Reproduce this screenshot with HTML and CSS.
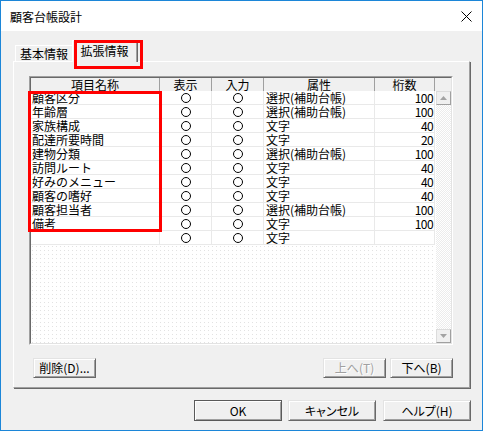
FILE: index.html
```html
<!DOCTYPE html>
<html lang="ja">
<head>
<meta charset="utf-8">
<title>顧客台帳設計</title>
<link rel="stylesheet" href="styles.css">
</head>
<body>
<div class="window">
  <div class="titlebar">
    <span class="title">顧客台帳設計</span>
    <svg class="close" width="11" height="11" viewBox="0 0 11 11"><path d="M0.5 0.5L10.5 10.5M10.5 0.5L0.5 10.5" stroke="#000" stroke-width="1" fill="none"/></svg>
  </div>
  <div class="client">
    <div class="tabs">
      <div class="tab">基本情報</div>
      <div class="tab active">拡張情報</div>
    </div>
    <div class="panel">
      <div class="list">
        <div class="list-inner">
          <div class="table">
            <div class="row head">
              <div class="cell">項目名称</div>
              <div class="cell">表示</div>
              <div class="cell">入力</div>
              <div class="cell">属性</div>
              <div class="cell">桁数</div>
            </div>
            <div class="row"><div class="cell name">顧客区分</div><div class="cell ctr"><i class="c"></i></div><div class="cell ctr"><i class="c"></i></div><div class="cell attr">選択(補助台帳)</div><div class="cell num">100</div></div>
            <div class="row"><div class="cell name">年齢層</div><div class="cell ctr"><i class="c"></i></div><div class="cell ctr"><i class="c"></i></div><div class="cell attr">選択(補助台帳)</div><div class="cell num">100</div></div>
            <div class="row"><div class="cell name">家族構成</div><div class="cell ctr"><i class="c"></i></div><div class="cell ctr"><i class="c"></i></div><div class="cell attr">文字</div><div class="cell num">40</div></div>
            <div class="row"><div class="cell name">配達所要時間</div><div class="cell ctr"><i class="c"></i></div><div class="cell ctr"><i class="c"></i></div><div class="cell attr">文字</div><div class="cell num">20</div></div>
            <div class="row"><div class="cell name">建物分類</div><div class="cell ctr"><i class="c"></i></div><div class="cell ctr"><i class="c"></i></div><div class="cell attr">選択(補助台帳)</div><div class="cell num">100</div></div>
            <div class="row"><div class="cell name">訪問ルート</div><div class="cell ctr"><i class="c"></i></div><div class="cell ctr"><i class="c"></i></div><div class="cell attr">文字</div><div class="cell num">40</div></div>
            <div class="row"><div class="cell name">好みのメニュー</div><div class="cell ctr"><i class="c"></i></div><div class="cell ctr"><i class="c"></i></div><div class="cell attr">文字</div><div class="cell num">40</div></div>
            <div class="row"><div class="cell name">顧客の嗜好</div><div class="cell ctr"><i class="c"></i></div><div class="cell ctr"><i class="c"></i></div><div class="cell attr">文字</div><div class="cell num">40</div></div>
            <div class="row"><div class="cell name">顧客担当者</div><div class="cell ctr"><i class="c"></i></div><div class="cell ctr"><i class="c"></i></div><div class="cell attr">選択(補助台帳)</div><div class="cell num">100</div></div>
            <div class="row"><div class="cell name">備考</div><div class="cell ctr"><i class="c"></i></div><div class="cell ctr"><i class="c"></i></div><div class="cell attr">文字</div><div class="cell num">100</div></div>
            <div class="row"><div class="cell name"></div><div class="cell ctr"><i class="c"></i></div><div class="cell ctr"><i class="c"></i></div><div class="cell attr">文字</div><div class="cell num"></div></div>
            <div class="empty"></div>
          </div>
          <div class="vscroll">
            <div class="vs-head"></div>
            <div class="sbtn"><svg width="7" height="4" viewBox="0 0 7 4"><path d="M3.5 0L7 4H0Z" fill="#a3a3a3"/></svg></div>
            <div class="track"></div>
            <div class="sbtn"><svg width="7" height="4" viewBox="0 0 7 4"><path d="M0 0H7L3.5 4Z" fill="#a3a3a3"/></svg></div>
          </div>
        </div>
        <div class="mark"></div>
      </div>
      <div class="panel-buttons">
        <div class="btn small">削除(D)...</div>
        <div class="spacer"></div>
        <div class="btn small disabled">上へ(T)</div>
        <div class="btn small">下へ(B)</div>
      </div>
    </div>
    <div class="dialog-buttons">
      <div class="btn big default">OK</div>
      <div class="btn big">キャンセル</div>
      <div class="btn big help">ヘルプ(H)</div>
    </div>
  </div>
</div>
</body>
</html>
```
FILE: styles.css
```css
* { box-sizing: border-box; }
html, body { margin: 0; padding: 0; }
body {
  width: 483px;
  height: 431px;
  overflow: hidden;
  background: #fff;
  font-family: "Noto Sans CJK JP", "Liberation Sans", sans-serif;
  font-size: 12px;
  color: #000;
}
.window {
  width: 483px;
  height: 431px;
  border: 1px solid #1c86d8;
  background: #f0f0f0;
  display: flex;
  flex-direction: column;
}
.titlebar {
  height: 30px;
  flex: none;
  background: #fff;
  display: flex;
  align-items: center;
  justify-content: space-between;
  padding: 0 10px 0 9px;
}
.title { line-height: 14px; margin-top: 1px; }
.close { display: block; margin-top: 1px; }

.client {
  flex: 1;
  padding: 9px 11px 0 12px;
}
.tabs {
  height: 21px;
  display: flex;
  align-items: flex-end;
  padding-left: 2px;
}
.tab {
  width: 58px;
  height: 16px;
  border: 1px solid #fff;
  border-bottom: none;
  border-right-color: #a0a0a0;
  text-align: center;
  line-height: 15px;
  background: #f0f0f0;
}
.tab.active {
  position: relative;
  z-index: 2;
  width: 65px;
  height: 22px;
  margin-left: -1px;
  margin-bottom: -1px;
  line-height: 19px;
  padding-bottom: 2px;
  box-shadow: 1px 0 0 #696969;
}
.tab.active::after {
  content: "";
  position: absolute;
  left: 1px;
  top: -1px;
  width: 63px;
  height: 23px;
  border: 3px solid #ff0000;
}
.panel {
  width: 457px;
  height: 327px;
  border: 1px solid #fff;
  border-right-color: #a0a0a0;
  border-bottom-color: #a0a0a0;
  box-shadow: 1px 1px 0 #696969;
  padding: 14px 0 0 15px;
}
.list {
  position: relative;
  width: 424px;
  height: 269px;
  border: 1px solid #a0a0a0;
  border-right-color: #fff;
  border-bottom-color: #fff;
}
.list-inner {
  height: 100%;
  border: 1px solid #696969;
  border-right-color: #e3e3e3;
  border-bottom-color: #e3e3e3;
  display: flex;
  background: #fff;
}
.table {
  width: 404px;
  display: flex;
  flex-direction: column;
}
.row {
  display: grid;
  grid-template-columns: 129px 52px 52px 111px 60px;
  height: 14px;
  flex: none;
}
.row .cell {
  border-right: 1px solid #e9e9e9;
  border-bottom: 1px solid #e9e9e9;
  line-height: 13px;
  white-space: nowrap;
}
.row.head { height: 13px; background: #f0f0f0; }
.row.head .cell {
  border-right: 1px solid #a0a0a0;
  border-bottom: none;
  text-align: center;
  line-height: 13px;
}
.name { padding-left: 1px; }
.attr { padding-left: 2px; }
.num { text-align: right; padding-right: 1px; letter-spacing: -0.6px; }
.ctr { display: flex; align-items: center; justify-content: center; }
.c {
  display: block;
  width: 10px;
  height: 10px;
  border: 1px solid #000;
  border-radius: 50%;
  margin-left: 1px;
}
.empty {
  flex: 1;
  background: #fff radial-gradient(circle at 1.5px 1.5px, #e2e2e2 0.7px, transparent 0.9px) 0 0 / 4px 4px;
}
.vscroll {
  width: 16px;
  display: flex;
  flex-direction: column;
}
.vs-head { height: 13px; background: #f0f0f0; flex: none; }
.sbtn {
  height: 14px;
  flex: none;
  margin-left: 1px;
  background: #f0f0f0;
  border: 1px solid #dcdcdc;
  border-right-color: #a0a0a0;
  border-bottom-color: #a0a0a0;
  display: flex;
  align-items: center;
  justify-content: center;
}
.sbtn svg { display: block; }
.track {
  flex: 1;
  margin-left: 1px;
  background: repeating-conic-gradient(#ffffff 0 25%, #ececec 0 50%) 0 0 / 2px 2px;
}
.mark {
  position: absolute;
  left: -2px;
  top: 14px;
  width: 134px;
  height: 141px;
  border: 3px solid #ff0000;
}
.panel-buttons {
  width: 424px;
  margin-top: 13px;
  padding-left: 4px;
  display: flex;
  gap: 4px;
}
.spacer { flex: 1; }
.btn {
  background: #f0f0f0;
  border: 1px solid #e3e3e3;
  border-right-color: #696969;
  border-bottom-color: #696969;
  box-shadow: inset 1px 1px 0 #fff, inset -1px -1px 0 #a0a0a0;
  text-align: center;
  font-feature-settings: "palt";
  white-space: nowrap;
}
.btn.small { width: 63px; height: 20px; line-height: 18px; }
.btn.big { width: 88px; height: 21px; line-height: 19px; }
.btn.default { border-color: #5a5a5a; }
.btn.disabled { color: #a0a0a0; text-shadow: 1px 1px 0 #fff; }
.dialog-buttons {
  margin-top: 12px;
  display: flex;
  justify-content: flex-end;
  gap: 6px;
}
.btn.help { margin-left: 1px; }
```
